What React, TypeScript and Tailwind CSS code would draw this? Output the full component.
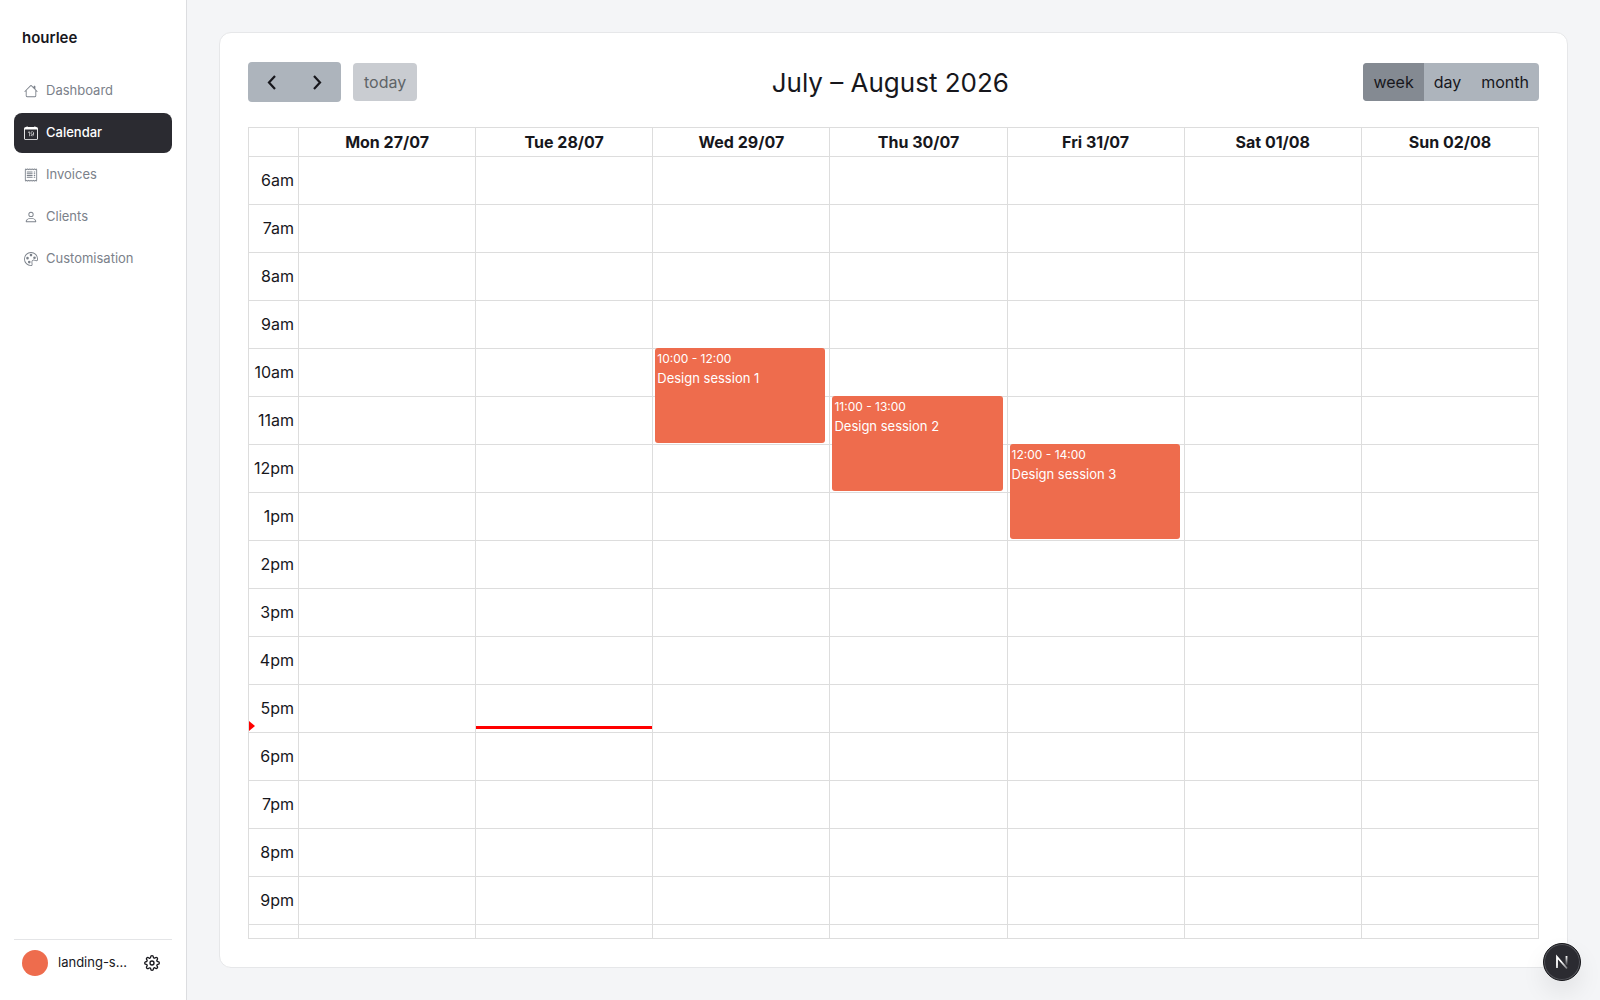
import clsx from 'clsx';
import type { IconType } from 'react-icons';
import { BsCalendarDate, BsHouse, BsPalette, BsPerson, BsReceipt } from 'react-icons/bs';
import { FiSettings } from 'react-icons/fi';

interface NavItem {
  label: string;
  icon: IconType;
}

interface Session {
  day: number;
  start: number;
  time: string;
  title: string;
}

const NAV_ITEMS: NavItem[] = [
  { label: 'Dashboard', icon: BsHouse },
  { label: 'Calendar', icon: BsCalendarDate },
  { label: 'Invoices', icon: BsReceipt },
  { label: 'Clients', icon: BsPerson },
  { label: 'Customisation', icon: BsPalette },
];

const DAYS = ['Mon 27/07', 'Tue 28/07', 'Wed 29/07', 'Thu 30/07', 'Fri 31/07', 'Sat 01/08', 'Sun 02/08'];

// 6am to 9pm
const HOURS = Array.from({ length: 16 }, (_, i) => i + 6);

const SESSIONS: Session[] = [
  { day: 2, start: 10, time: '10:00 - 12:00', title: 'Design session 1' },
  { day: 3, start: 11, time: '11:00 - 13:00', title: 'Design session 2' },
  { day: 4, start: 12, time: '12:00 - 14:00', title: 'Design session 3' },
];

const VIEWS = ['week', 'day', 'month'];

const NOW = { day: 1, hour: 17 };

function formatHour(hour: number) {
  return hour < 12 ? `${hour}am` : `${hour === 12 ? 12 : hour - 12}pm`;
}

function Sidebar() {
  return (
    <aside className="flex w-[187px] shrink-0 flex-col border-r border-[#dcdde0] bg-white px-3.5">
      <div className="px-2 pt-[26px] text-[15px] leading-6 font-semibold">hourlee</div>
      <nav className="mt-[21px] flex flex-col gap-0.5">
        {NAV_ITEMS.map(({ label, icon: Icon }) => (
          <a
            key={label}
            href="#"
            aria-current={label === 'Calendar' ? 'page' : undefined}
            className={clsx(
              'flex h-10 items-center gap-2 rounded-lg px-2.5 text-[13px]',
              label === 'Calendar' ? 'bg-[#2b2b31] font-medium text-white' : 'text-[#7b818a]'
            )}
          >
            <Icon size={14} className="mb-px shrink-0" />
            {label}
          </a>
        ))}
      </nav>
      <div className="mt-auto flex h-[61px] items-center border-t border-[#e4e5e7] px-2 pb-3.5">
        <span className="size-[26px] shrink-0 rounded-full bg-[#ee6c4d]" />
        <span className="ml-2.5 text-[13px]">landing-s...</span>
        <button type="button" aria-label="Settings" className="ml-auto mr-1">
          <FiSettings size={16} />
        </button>
      </div>
    </aside>
  );
}

function Toolbar() {
  return (
    <div className="flex h-[42px] items-center justify-between">
      <div className="flex items-center gap-3">
        <div className="flex h-10 overflow-hidden rounded bg-[#adb4bc]">
          <button type="button" aria-label="Previous week" className="flex w-[47px] items-center justify-center">
            <svg width="24" height="24" viewBox="0 0 24 24" fill="none" stroke="currentColor" strokeWidth="2.2">
              <path d="M15 6 9 12.5l6 6.5" />
            </svg>
          </button>
          <button type="button" aria-label="Next week" className="flex w-[46px] items-center justify-center">
            <svg width="24" height="24" viewBox="0 0 24 24" fill="none" stroke="currentColor" strokeWidth="2.2">
              <path d="M8 6l6 6.5L8 19" />
            </svg>
          </button>
        </div>
        <button type="button" disabled className="h-[38px] rounded bg-[#c9ccd1] px-[11px] text-[#5f6468]">
          today
        </button>
      </div>
      <h2 className="text-[26px]">July – August 2026</h2>
      <div className="flex h-[38px] overflow-hidden rounded bg-[#adb4bc]">
        {VIEWS.map((view) => (
          <button
            key={view}
            type="button"
            aria-pressed={view === 'week'}
            className={clsx('px-2.5', view === 'week' && 'bg-[#848a92]')}
          >
            {view}
          </button>
        ))}
      </div>
    </div>
  );
}

function SessionBlock({ session }: { session: Session }) {
  return (
    <div className="absolute -top-px left-0.5 right-1 z-10 h-[95px] rounded-[3px] bg-[#ee6c4d] px-0.5 text-white">
      <div className="pt-[3px] text-xs leading-4">{session.time}</div>
      <div className="pt-px text-[13px] leading-5">{session.title}</div>
    </div>
  );
}

function WeekGrid() {
  return (
    <div className="mt-6 min-h-0 flex-1 overflow-hidden border border-[#dddddd]">
      <table className="w-full table-fixed border-separate border-spacing-0">
        <thead>
          <tr>
            <td className="w-[49px]" />
            {DAYS.map((day) => (
              <th key={day} scope="col" className="h-7 border-l border-[#dddddd] p-0 leading-6 font-bold">
                {day}
              </th>
            ))}
          </tr>
        </thead>
        <tbody>
          {HOURS.map((hour) => (
            <tr key={hour}>
              <th
                scope="row"
                className="relative h-12 border-t border-[#dddddd] p-0 pr-1 pb-0.5 text-right font-normal"
              >
                {hour === NOW.hour && (
                  <span className="absolute left-0 top-9 border-y-[5px] border-l-[6px] border-y-transparent border-l-[#ff0000]" />
                )}
                {formatHour(hour)}
              </th>
              {DAYS.map((day, index) => {
                const session = SESSIONS.find((s) => s.day === index && s.start === hour);
                return (
                  <td key={day} className="relative h-12 border-l border-t border-[#dddddd] p-0">
                    {session && <SessionBlock session={session} />}
                    {index === NOW.day && hour === NOW.hour && (
                      <div className="absolute inset-x-0 top-[41px] h-[3px] bg-[#ff0000]" />
                    )}
                  </td>
                );
              })}
            </tr>
          ))}
          <tr>
            <td className="h-12 border-t border-[#dddddd]" />
            {DAYS.map((day) => (
              <td key={day} className="h-12 border-l border-t border-[#dddddd]" />
            ))}
          </tr>
        </tbody>
      </table>
    </div>
  );
}

function DevBadge() {
  return (
    <button
      type="button"
      aria-label="Open dev tools"
      className="fixed bottom-[19px] right-[19px] flex size-[38px] items-center justify-center rounded-full border border-[#17171b] bg-[#2b2b31] shadow-[inset_0_0_0_1px_#55565c,0_12px_24px_rgba(0,0,0,0.08)]"
    >
      <svg width="36" height="36" viewBox="0 0 36 36" fill="none">
        <defs>
          <linearGradient id="stem" x1="23" y1="12" x2="23" y2="22" gradientUnits="userSpaceOnUse">
            <stop stopColor="white" />
            <stop offset="1" stopColor="white" stopOpacity="0" />
          </linearGradient>
          <linearGradient id="slash" x1="18" y1="17" x2="25" y2="26" gradientUnits="userSpaceOnUse">
            <stop stopColor="white" />
            <stop offset="1" stopColor="white" stopOpacity="0.2" />
          </linearGradient>
        </defs>
        <path d="M13 24V13L23 24.5" stroke="url(#slash)" strokeWidth="1.8" />
        <path d="M22.5 12v9" stroke="url(#stem)" strokeWidth="1.8" />
      </svg>
    </button>
  );
}

export default function App() {
  return (
    <div className="flex h-screen bg-[#f4f5f7] font-[Inter,'Liberation_Sans',sans-serif] text-base text-[#17171c]">
      <Sidebar />
      <main className="flex min-w-0 flex-1 p-8">
        <section className="flex min-w-0 flex-1 flex-col rounded-xl border border-[#e6e7e9] bg-white p-7">
          <Toolbar />
          <WeekGrid />
        </section>
      </main>
      <DevBadge />
    </div>
  );
}
